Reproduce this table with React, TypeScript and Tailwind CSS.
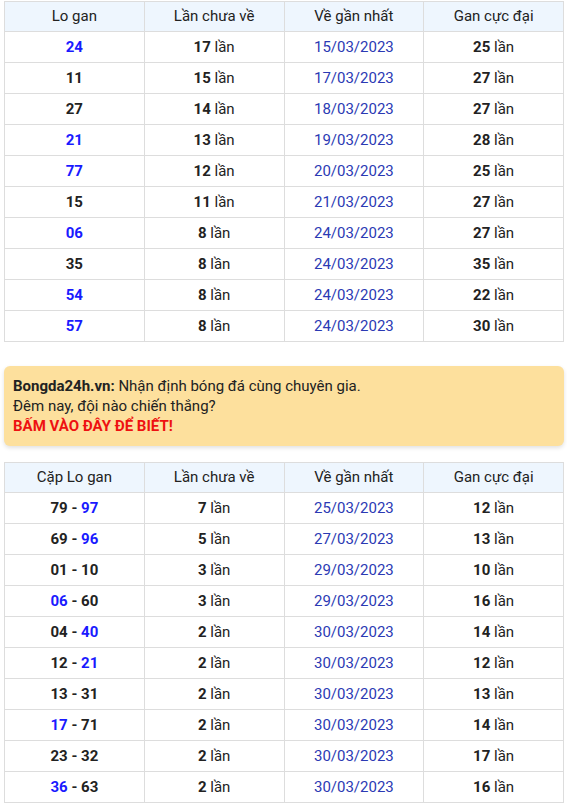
const loGan = [
  { n: "24", hot: true, miss: "17", last: "15/03/2023", max: "25" },
  { n: "11", hot: false, miss: "15", last: "17/03/2023", max: "27" },
  { n: "27", hot: false, miss: "14", last: "18/03/2023", max: "27" },
  { n: "21", hot: true, miss: "13", last: "19/03/2023", max: "28" },
  { n: "77", hot: true, miss: "12", last: "20/03/2023", max: "25" },
  { n: "15", hot: false, miss: "11", last: "21/03/2023", max: "27" },
  { n: "06", hot: true, miss: "8", last: "24/03/2023", max: "27" },
  { n: "35", hot: false, miss: "8", last: "24/03/2023", max: "35" },
  { n: "54", hot: true, miss: "8", last: "24/03/2023", max: "22" },
  { n: "57", hot: true, miss: "8", last: "24/03/2023", max: "30" },
];

// cặp số: a / b, ah / bh = tô xanh
const capLoGan = [
  { a: "79", ah: false, b: "97", bh: true, miss: "7", last: "25/03/2023", max: "12" },
  { a: "69", ah: false, b: "96", bh: true, miss: "5", last: "27/03/2023", max: "13" },
  { a: "01", ah: false, b: "10", bh: false, miss: "3", last: "29/03/2023", max: "10" },
  { a: "06", ah: true, b: "60", bh: false, miss: "3", last: "29/03/2023", max: "16" },
  { a: "04", ah: false, b: "40", bh: true, miss: "2", last: "30/03/2023", max: "14" },
  { a: "12", ah: false, b: "21", bh: true, miss: "2", last: "30/03/2023", max: "12" },
  { a: "13", ah: false, b: "31", bh: false, miss: "2", last: "30/03/2023", max: "13" },
  { a: "17", ah: true, b: "71", bh: false, miss: "2", last: "30/03/2023", max: "14" },
  { a: "23", ah: false, b: "32", bh: false, miss: "2", last: "30/03/2023", max: "17" },
  { a: "36", ah: true, b: "63", bh: false, miss: "2", last: "30/03/2023", max: "16" },
];

const th = "border border-[#dddddd] h-[30px] font-normal text-[#222222] text-center w-1/4";
const td = "border border-[#dddddd] h-[31px] text-center";

const Num = ({ v, hot }: { v: string; hot: boolean }) => (
  <span className={hot ? "font-bold text-[#1a1aff]" : "font-bold text-[#222222]"}>{v}</span>
);

const Head = ({ first }: { first: string }) => (
  <thead>
    <tr className="bg-[#eef6fe]">
      <th className={th}>{first}</th>
      <th className={th}>Lần chưa về</th>
      <th className={th}>Về gần nhất</th>
      <th className={th}>Gan cực đại</th>
    </tr>
  </thead>
);

const Times = ({ v }: { v: string }) => (
  <>
    <span className="font-bold">{v}</span> lần
  </>
);

export default function App() {
  return (
    <div className="w-[567px] bg-white pl-1 pr-[3px] pt-[1px] text-[15px] text-[#222222] font-['Roboto','Liberation_Sans',sans-serif]">
      <table className="w-full border-collapse table-fixed">
        <Head first="Lo gan" />
        <tbody>
          {loGan.map((r) => (
            <tr key={r.n}>
              <td className={td}><Num v={r.n} hot={r.hot} /></td>
              <td className={td}><Times v={r.miss} /></td>
              <td className={`${td} text-[#2b3ab4]`}>{r.last}</td>
              <td className={td}><Times v={r.max} /></td>
            </tr>
          ))}
        </tbody>
      </table>

      <div className="mt-[24px] mb-4 rounded-md bg-[#fde09d] px-[9px] py-[10px] leading-[20px] shadow-[0_2px_4px_rgba(0,0,0,0.12)]">
        <div>
          <span className="font-bold">Bongda24h.vn:</span> Nhận định bóng đá cùng chuyên gia.
        </div>
        <div>Đêm nay, đội nào chiến thắng?</div>
        <div className="font-bold text-[#ee1111]">BẤM VÀO ĐÂY ĐỂ BIẾT!</div>
      </div>

      <table className="w-full border-collapse table-fixed">
        <Head first="Cặp Lo gan" />
        <tbody>
          {capLoGan.map((r) => (
            <tr key={r.a + r.b}>
              <td className={td}>
                <Num v={r.a} hot={r.ah} /> <span className="font-bold">-</span> <Num v={r.b} hot={r.bh} />
              </td>
              <td className={td}><Times v={r.miss} /></td>
              <td className={`${td} text-[#2b3ab4]`}>{r.last}</td>
              <td className={td}><Times v={r.max} /></td>
            </tr>
          ))}
        </tbody>
      </table>
    </div>
  );
}
